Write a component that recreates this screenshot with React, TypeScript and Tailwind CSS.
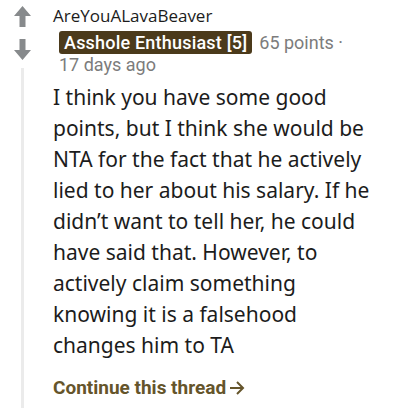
import React from "react";

const ArrowIcon: React.FC<{ down?: boolean }> = ({ down = false }) => (
  <svg
    width="17"
    height="21"
    viewBox="0 0 17 21"
    className={down ? "rotate-180" : ""}
  >
    <path d="M8.5 0 L17 10 L11.5 10 L11.5 21 L5.5 21 L5.5 10 L0 10 Z" fill="#878a8c" />
  </svg>
);

export default function App() {
  return (
    <div className="w-[402px] h-[415px] bg-white flex overflow-hidden">
      <div className="w-[53px] flex flex-col items-start pl-[14px] pt-[6px] shrink-0">
        <div className="flex flex-col gap-[12px]">
          <ArrowIcon />
          <ArrowIcon down />
        </div>
        <div className="mt-[8px] ml-[7px] w-[3px] h-[340px] bg-[#ebebeb]" />
      </div>
      <div className="flex flex-col pt-[5px]">
        <div
          className="text-[17px] leading-[22px] text-[#1c1c1c]"
          style={{ fontFamily: "'Open Sans', sans-serif" }}
        >
          AreYouALavaBeaver
        </div>
        <div
          className="flex items-center mt-[4px] ml-[6px] text-[18px]"
          style={{ fontFamily: "'Roboto', 'Liberation Sans', sans-serif" }}
        >
          <span className="bg-[#4b3a1b] text-white px-[5px] rounded-[3px] leading-[23px] font-medium tracking-[0.2px]">
            Asshole Enthusiast [5]
          </span>
          <span className="ml-[7px] text-[#7c7c7c] leading-[23px]">65 points ·</span>
        </div>
        <div
          className="ml-[6px] text-[18px] leading-[22px] text-[#7c7c7c]"
          style={{ fontFamily: "'Roboto', 'Liberation Sans', sans-serif" }}
        >
          17 days ago
        </div>
        <p
          className="mt-[6px] text-[21px] leading-[31px] text-[#1c1c1c] w-[335px]"
          style={{ fontFamily: "'Noto Sans', sans-serif" }}
        >
          I think you have some good points, but I think she would be NTA for
          the fact that he actively lied to her about his salary. If he didn’t
          want to tell her, he could have said that. However, to actively claim
          something
          <br />
          knowing it is a falsehood
          <br />
          changes him to TA
        </p>
        <div
          className="mt-[13px] flex items-center gap-[3px] text-[19px] font-bold text-[#65552b]"
          style={{ fontFamily: "'Roboto', 'Liberation Sans', sans-serif" }}
        >
          Continue this thread
          <svg width="16" height="16" viewBox="0 0 16 16" fill="none">
            <path
              d="M1 8 H14 M8 2 L14 8 L8 14"
              stroke="#65552b"
              strokeWidth="2"
            />
          </svg>
        </div>
      </div>
    </div>
  );
}
